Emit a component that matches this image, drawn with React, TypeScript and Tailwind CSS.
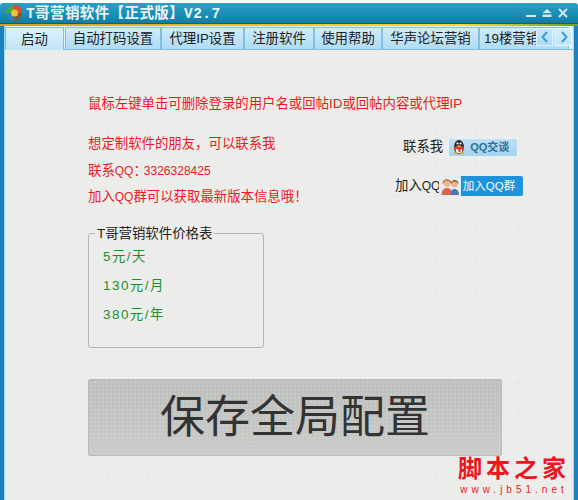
const CJK = '[font-family:"Liberation_Sans","Noto_Sans_CJK_SC",sans-serif]';

const tabs = [
  { label: '自动打码设置', width: 'w-[96px]' },
  { label: '代理IP设置', width: 'w-[83px]' },
  { label: '注册软件', width: 'w-[70px]' },
  { label: '使用帮助', width: 'w-[68px]' },
  { label: '华声论坛营销', width: 'w-[97px]' },
];

const prices = ['5元/天', '130元/月', '380元/年'];

const AppIcon = () => (
  <svg width="18" height="18" viewBox="0 0 18 18" className="shrink-0">
    <circle cx="9" cy="9" r="8" fill="#7a5a3a" />
    <path d="M9 1a8 8 0 0 1 8 8H9z" fill="#e8482c" />
    <path d="M1 9a8 8 0 0 1 8-8v8z" fill="#3fae49" />
    <path d="M1 9h8v8a8 8 0 0 1-8-8z" fill="#2b7fc4" />
    <circle cx="9.5" cy="9" r="3.5" fill="#f2c230" />
  </svg>
);

const Penguin = () => (
  <svg width="16" height="16" viewBox="0 0 16 16" className="shrink-0">
    <ellipse cx="8" cy="8" rx="5" ry="7" fill="#2a2a2a" />
    <ellipse cx="8" cy="10.500" rx="3.400" ry="3.800" fill="#f4f4f4" />
    <circle cx="6.500" cy="4.500" r="1.100" fill="#fff" />
    <circle cx="9.500" cy="4.500" r="1.100" fill="#fff" />
    <path d="M3.500 7.500h9l.8 2.200L9.500 10.500v2.500h-2v-2.500L2.700 9.700z" fill="#e2372a" />
    <path d="M6.300 6.500h3.400L8 8z" fill="#f2b01e" />
    <path d="M2.500 15h4.500l-1-1.800H4zM9 15h4.500L12 13.200h-2z" fill="#f2a51e" />
  </svg>
);

const Group = () => (
  <svg width="22" height="20" viewBox="0 0 22 20" className="shrink-0">
    <rect width="22" height="20" rx="1" fill="#e4ecf0" />
    <circle cx="8" cy="7" r="3.800" fill="#f0b48a" />
    <path d="M3.500 8a4.500 4.500 0 0 1 9 0L10 4.500H6z" fill="#8a4a20" />
    <path d="M2.500 19c0-4.500 2.500-7 5.500-7s5.500 2.500 5.500 7z" fill="#d8644c" />
    <circle cx="15.500" cy="8" r="3.300" fill="#f0b48a" />
    <path d="M12 8a3.700 3.700 0 0 1 7.400 0L17.500 5.500h-4z" fill="#5a3018" />
    <path d="M11.500 19c0-3.800 1.500-6 4-6s4.500 2.200 4.500 6z" fill="#4a78b8" />
  </svg>
);

const Chevron = ({ dir }: { dir: 'left' | 'right' }) => (
  <svg width="8" height="12" viewBox="0 0 8 12" fill="none" stroke="#3f9bd6" strokeWidth="2">
    <path d={dir === 'left' ? 'M6 1 1.500 6 6 11' : 'M2 1 6.500 6 2 11'} />
  </svg>
);

const App = () => {
  return (
    <div className={`relative w-[578px] h-[500px] overflow-hidden bg-white pt-[3px] ${CJK}`}>
      {/* Title bar */}
      <div className="h-[20px] flex items-center pl-[5px] pr-[10px] bg-gradient-to-b from-[#2ba0c6] to-[#0a7fa9] rounded-t-[3px]">
        <AppIcon />
        <span className="ml-[3px] mt-[2px] text-[14.5px] leading-[18px] font-bold tracking-[0.4px] text-[#e8f4f8] [font-family:'Liberation_Mono','Noto_Sans_CJK_SC',monospace]">
          T哥营销软件【正式版】V2.7
        </span>
        <div className="ml-auto flex items-center gap-[6px] text-[#d5e6ec]">
          <svg width="10" height="10" viewBox="0 0 10 10" fill="currentColor"><rect y="7" width="10" height="2" /></svg>
          <svg width="10" height="10" viewBox="0 0 10 10" fill="currentColor"><path d="M5 1 9.500 5h-9zM0.500 6.500h9V9h-9z" /></svg>
          <svg width="10" height="10" viewBox="0 0 10 10" stroke="currentColor" strokeWidth="2"><path d="m1 1 8 8M9 1 1 9" /></svg>
        </div>
      </div>
      <div className="h-[3px] border-t border-t-[#5a4a30] bg-gradient-to-r from-[#c8a818] via-[#f0e020] via-80% to-[#6aa030]" />

      <div className="h-[474px] flex border-l-[4px] border-r-[4px] border-x-[#1d7fc0]">
        <div className="flex-1 min-w-0 flex flex-col relative border-l border-r border-x-[#8fdcf4] bg-[#ecedeb] bg-[radial-gradient(circle,#f8cdd4_0.8px,transparent_1.100px),radial-gradient(circle,#fbfbfb_0.7px,transparent_1px)] bg-[length:41px_31px,29px_37px]">
          {/* Tabs */}
          <div className="h-[24px] flex items-end bg-[#dff1fb] border-b border-b-[#7fbfe2] text-[13.4px] text-[#222]">
            <div className="w-[59px] h-[23px] -mb-px pt-[2px] flex items-center justify-center bg-gradient-to-b from-[#dcf1fd] to-[#c0e5f8] border border-[#7fbfe2] border-b-0">
              启动
            </div>
            <div className="flex-1 min-w-0 flex items-end overflow-hidden pl-px">
              {tabs.map((t) => (
                <div
                  key={t.label}
                  className={`${t.width} h-[22px] pt-[2px] shrink-0 flex items-center justify-center bg-gradient-to-b from-[#d0ebfb] to-[#aedcf5] border border-[#7fbfe2] border-b-0`}
                >
                  {t.label}
                </div>
              ))}
              <div className="w-[90px] h-[22px] pt-[2px] shrink-0 flex items-center pl-[4px] bg-gradient-to-b from-[#d0ebfb] to-[#aedcf5] border border-[#7fbfe2] border-b-0 overflow-hidden whitespace-nowrap">
                19楼营销
              </div>
            </div>
            <div className="absolute right-[1px] top-[2px] flex gap-[2px]">
              <div className="w-[17px] h-[18px] flex items-center justify-center bg-gradient-to-b from-[#cbe9fa] to-[#a9daf5] border border-[#dff1fb]"><Chevron dir="left" /></div>
              <div className="w-[17px] h-[18px] flex items-center justify-center bg-gradient-to-b from-[#d6eefb] to-[#bfe4f8] border border-[#e6f4fb]"><Chevron dir="right" /></div>
            </div>
          </div>

          {/* Page body */}
          <div className="flex-1 pl-[83px] pt-[45px] flex flex-col items-start">
            <p className="text-[13.4px] leading-[18px] text-[#f01822] whitespace-nowrap">鼠标左键单击可删除登录的用户名或回帖ID或回帖内容或代理IP</p>

            <div className="mt-[18px] w-[436px] flex justify-between">
              <div className="flex flex-col gap-[8px] text-[#f01822] text-[13.4px] leading-[18px]">
                <p className="mt-[4px] mb-[1px]">想定制软件的朋友，可以联系我</p>
                <p>联系<span className="text-[12px]">QQ</span><span className="tracking-[-3px]">：</span><span className="text-[12px]">3326328425</span></p>
                <p>加入<span className="text-[12px]">QQ</span>群可以获取最新版本信息哦！</p>
              </div>
              <div className="w-[129px] pt-[6px] flex flex-col items-start text-[13.4px] text-[#222]">
                <div className="ml-[8px] flex items-center gap-[5px]">
                  <span>联系我</span>
                  <div className="w-[70px] h-[19px] flex items-center gap-[3px] pl-[2px] bg-gradient-to-b from-[#bfe0f4] to-[#a4d2ec] border border-[#e4f2fa] rounded-[2px] text-[11px] font-bold text-[#2b6f9e]">
                    <Penguin />
                    QQ交谈
                  </div>
                </div>
                <div className="mt-[19px] flex items-center">
                  <span className="whitespace-nowrap">加入<span className="text-[12px]">QQ</span>群</span>
                  <div className="relative -ml-[15px] w-[84px] h-[20px] flex items-center gap-[2px] bg-[#1e93dc] rounded-[2px] text-[11.5px] text-white">
                    <Group />
                    加入QQ群
                  </div>
                </div>
              </div>
            </div>

            {/* Price table */}
            <div className="relative mt-[27px] w-[176px] h-[115px] border border-[#b3b5b9] rounded-[3px] pl-[14px] pt-[14px] flex flex-col gap-[11px] text-[13.4px] leading-[18px] tracking-[1.500px] text-[#18912a]">
              <span className="absolute left-[6px] -top-[9px] px-[2px] bg-[#ecedeb] tracking-normal text-[#222] whitespace-nowrap">T哥营销软件价格表</span>
              {prices.map((p) => (
                <p key={p}>{p}</p>
              ))}
            </div>

            <button className="mt-[31px] w-[414px] h-[77px] flex items-center justify-center border border-[#b9bbbb] rounded-[2px] bg-[radial-gradient(circle,#d3d4d2_0.5px,transparent_0.9px),linear-gradient(to_bottom,#bdbfbd,#cbccca)] bg-[length:4px_4px,100%_100%] text-[45px] text-[#333]">
              保存全局配置
            </button>
          </div>

          {/* jb51 watermark */}
          <div className="absolute right-[4px] bottom-[4px] w-[110px] flex flex-col items-center text-[#f0141e]">
            <span className="text-[24px] leading-[30px] font-bold tracking-[4px] whitespace-nowrap">脚本之家</span>
            <span className="text-[10px] leading-[12px] tracking-[4px] whitespace-nowrap">www.jb51.net</span>
          </div>
        </div>
      </div>
    </div>
  );
};

export default App;
